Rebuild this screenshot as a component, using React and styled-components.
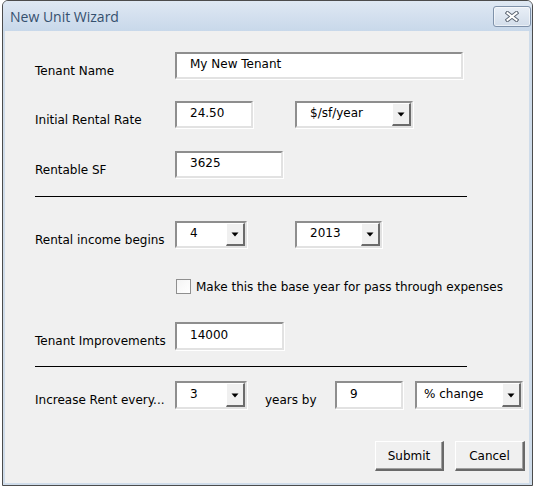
import React from 'react'
import { styled, createGlobalStyle } from 'styled-components'

const GlobalStyle = createGlobalStyle`
  html, body {
    margin: 0;
    padding: 0;
    background: #ffffff;
  }
  body {
    font-family: 'DejaVu Sans', Verdana, sans-serif;
  }
`

function CloseGlyph() {
  return (
    <svg width="14" height="11" viewBox="0 0 14 11">
      <path d="M2.5 2 L11.5 9 M11.5 2 L2.5 9" stroke="#5b6573" strokeWidth="4" strokeLinecap="square" fill="none" />
      <path d="M2.5 2 L11.5 9 M11.5 2 L2.5 9" stroke="#ffffff" strokeWidth="2" strokeLinecap="square" fill="none" />
    </svg>
  )
}

function ArrowGlyph() {
  return (
    <svg width="8" height="5" viewBox="0 0 8 5">
      <polygon points="0.5,0.5 7.5,0.5 4,4.5" fill="#000" />
    </svg>
  )
}

function ComboBox({ value, width, pad }) {
  return (
    <Combo $w={width}>
      <ComboText $pl={pad}>{value}</ComboText>
      <ArrowButton>
        <ArrowGlyph />
      </ArrowButton>
    </Combo>
  )
}

function App() {
  return (
    <>
      <GlobalStyle />
      <Window>
        <TitleBar>
          <Title>New Unit Wizard</Title>
          <CloseButton>
            <CloseGlyph />
          </CloseButton>
        </TitleBar>
        <Body>
          <Row $mt={0}>
            <Label>Tenant Name</Label>
            <TextBox $w={288} defaultValue="My New Tenant" />
          </Row>
          <Row $mt={22}>
            <Label>Initial Rental Rate</Label>
            <TextBox $w={78} defaultValue="24.50" />
            <Spacer $w={42} />
            <ComboBox value="$/sf/year" width={118} />
          </Row>
          <Row $mt={23}>
            <Label>Rentable SF</Label>
            <TextBox $w={108} defaultValue="3625" />
          </Row>
          <Divider $mt={18} />
          <Row $mt={24}>
            <Label>Rental income begins</Label>
            <ComboBox value="4" width={72} />
            <Spacer $w={48} />
            <ComboBox value="2013" width={87} />
          </Row>
          <CheckRow>
            <CheckBox />
            <CheckLabel>Make this the base year for pass through expenses</CheckLabel>
          </CheckRow>
          <Row $mt={28} $h={28}>
            <Label>Tenant Improvements</Label>
            <TextBox $w={109} defaultValue="14000" />
          </Row>
          <Divider $mt={16} />
          <Row $mt={14} $h={28}>
            <Label>Increase Rent every...</Label>
            <ComboBox value="3" width={72} />
            <InlineText>years by</InlineText>
            <TextBox $w={68} $pl={13} defaultValue="9" />
            <Spacer $w={12} />
            <ComboBox value="% change" width={108} pad={7} />
          </Row>
          <ButtonRow>
            <PushButton $w={69}>Submit</PushButton>
            <PushButton $w={70}>Cancel</PushButton>
          </ButtonRow>
        </Body>
      </Window>
    </>
  )
}

export default App

const Window = styled.div`
  box-sizing: border-box;
  margin-left: 2px;
  width: 531px;
  height: 486px;
  border: 1px solid #4c4c4c;
  border-radius: 6px 6px 0 0;
  background: #cfdcea;
  display: flex;
  flex-direction: column;
  overflow: hidden;
`
const TitleBar = styled.div`
  flex: none;
  height: 30px;
  display: flex;
  justify-content: space-between;
  align-items: flex-start;
  padding: 0 1px 0 7px;
  background: linear-gradient(#dfe8f3, #c8d8ea);
`
const Title = styled.div`
  padding-top: 2px;
  line-height: 28px;
  font-family: 'Open Sans', 'Noto Sans', sans-serif;
  font-size: 14px;
  color: #35506e;
`
const CloseButton = styled.div`
  box-sizing: border-box;
  margin-top: 5px;
  width: 38px;
  height: 21px;
  border: 1px solid #7f92aa;
  border-radius: 3px;
  background: linear-gradient(#e9eff7, #d2ddea);
  box-shadow: inset 0 0 0 1px rgba(255, 255, 255, 0.55);
  display: flex;
  align-items: center;
  justify-content: center;
`
const Body = styled.div`
  flex: 1;
  margin: 0 3px 2px 2px;
  padding: 21px 0 0 30px;
  background: #f0f0f0;
  display: flex;
  flex-direction: column;
  font-size: 12px;
  color: #000;
`
const Row = styled.div`
  display: flex;
  align-items: center;
  height: ${p => p.$h || 27}px;
  margin-top: ${p => p.$mt}px;
`
const Label = styled.div`
  flex: none;
  width: 140px;
  margin-top: 10px;
  white-space: nowrap;
`
const Spacer = styled.div`
  flex: none;
  width: ${p => p.$w}px;
`
const TextBox = styled.input`
  flex: none;
  box-sizing: border-box;
  width: ${p => p.$w}px;
  height: 100%;
  margin: 0;
  padding: 0 0 3px ${p => p.$pl ?? 13}px;
  border: 2px solid;
  border-color: #8e8e8e #e2e2e2 #e2e2e2 #8e8e8e;
  box-shadow: 1px 1px 0 #ffffff;
  background: #ffffff;
  font-family: 'DejaVu Sans', Verdana, sans-serif;
  font-size: 12px;
  color: #000;
  outline: none;
`
const Combo = styled.div`
  flex: none;
  box-sizing: border-box;
  width: ${p => p.$w}px;
  height: 100%;
  display: flex;
  border: 2px solid;
  border-color: #8e8e8e #e2e2e2 #e2e2e2 #8e8e8e;
  box-shadow: 1px 1px 0 #ffffff;
  background: #ffffff;
`
const ComboText = styled.div`
  flex: 1;
  display: flex;
  align-items: center;
  padding: 0 0 3px ${p => p.$pl ?? 13}px;
  white-space: nowrap;
`
const ArrowButton = styled.div`
  flex: none;
  box-sizing: border-box;
  width: 19px;
  border-style: solid;
  border-width: 1px 2px 2px 1px;
  border-color: #ffffff #6b6b6b #6b6b6b #ffffff;
  background: #f0f0f0;
  display: flex;
  align-items: center;
  justify-content: center;
  padding-top: 1px;
`
const InlineText = styled.div`
  flex: none;
  width: 70px;
  margin: 10px 0 0 18px;
`
const Divider = styled.div`
  width: 432px;
  height: 1px;
  background: #000;
  margin-top: ${p => p.$mt}px;
`
const CheckRow = styled.div`
  display: flex;
  align-items: center;
  height: 15px;
  margin: 31px 0 0 141px;
`
const CheckBox = styled.div`
  box-sizing: border-box;
  width: 15px;
  height: 15px;
  border: 1px solid #8f8f8f;
  background: linear-gradient(135deg, #f4f4f4, #ffffff);
`
const CheckLabel = styled.div`
  margin-left: 5px;
  white-space: nowrap;
`
const ButtonRow = styled.div`
  display: flex;
  gap: 11px;
  margin: 32px 0 0 340px;
`
const PushButton = styled.div`
  box-sizing: border-box;
  width: ${p => p.$w}px;
  height: 30px;
  border-style: solid;
  border-width: 1px 2px 2px 1px;
  border-color: #ffffff #696969 #696969 #ffffff;
  box-shadow: inset -1px -1px 0 #a0a0a0;
  background: #f0f0f0;
  display: flex;
  align-items: center;
  justify-content: center;
`
